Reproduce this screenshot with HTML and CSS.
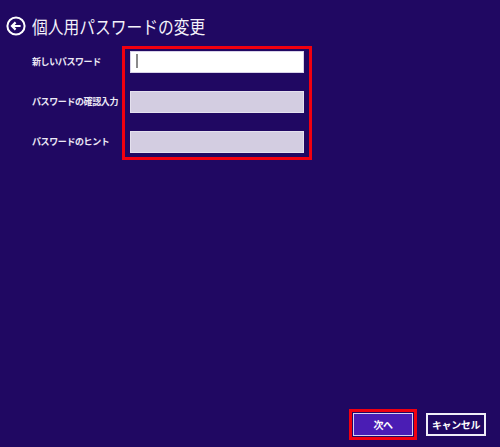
FILE: index.html
```html
<!DOCTYPE html>
<html lang="ja">
<head>
<meta charset="utf-8">
<link rel="stylesheet" href="styles.css">
</head>
<body>
<div class="page">
  <header class="header">
    <svg class="back" viewBox="0 0 20 20" width="20" height="20" aria-hidden="true">
      <circle cx="10" cy="10" r="8.6" fill="none" stroke="#fff" stroke-width="2"/>
      <path d="M14.6 10H6.2M9.6 6.4L6 10l3.6 3.6" fill="none" stroke="#fff" stroke-width="2.2" stroke-linecap="butt" stroke-linejoin="miter"/>
    </svg>
    <h1 class="title">個人用パスワードの変更</h1>
  </header>
  <section class="form">
    <div class="labels">
      <div class="label">新しいパスワード</div>
      <div class="label">パスワードの確認入力</div>
      <div class="label">パスワードのヒント</div>
    </div>
    <div class="fields">
      <div class="input active"><span class="caret"></span></div>
      <div class="input disabled"></div>
      <div class="input disabled"></div>
    </div>
  </section>
  <footer class="actions">
    <button class="btn primary">次へ</button>
    <button class="btn">キャンセル</button>
  </footer>
</div>
</body>
</html>
```
FILE: styles.css
```css
html, body {
  margin: 0;
  padding: 0;
  background: #200862;
}
body {
  font-family: "Noto Sans CJK JP", "Noto Sans", sans-serif;
  color: #fff;
}
.page {
  height: 447px;
  display: flex;
  flex-direction: column;
  box-sizing: border-box;
}
.header {
  display: flex;
  align-items: center;
  height: 20px;
  margin-top: 16px;
  padding-left: 6px;
  gap: 6px;
}
.back {
  display: block;
  flex: none;
}
.title {
  margin: 0;
  font-size: 18px;
  font-weight: 400;
  letter-spacing: 0;
  line-height: 20px;
  color: #f4f2fa;
  white-space: nowrap;
  transform: scaleX(0.875);
  transform-origin: left center;
}
.form {
  display: flex;
  margin-top: 10px;
  padding-left: 32px;
}
.labels {
  width: 90px;
  padding-top: 5px;
  display: flex;
  flex-direction: column;
  gap: 18px;
}
.label {
  height: 22px;
  line-height: 22px;
  font-size: 9px;
  font-weight: 700;
  letter-spacing: -0.4px;
  color: #ece9f5;
  white-space: nowrap;
}
.fields {
  width: 190px;
  box-sizing: border-box;
  border: 3px solid #f2000f;
  padding: 2px 5px 4px 5px;
  display: flex;
  flex-direction: column;
  gap: 18px;
}
.input {
  height: 22px;
  box-sizing: border-box;
  border: 1px solid #e6e2f0;
  position: relative;
}
.input.active {
  background: #ffffff;
  border-color: #d8d2e8;
}
.input.disabled {
  background: #d3cde1;
  border-color: #e4e0ee;
}
.caret {
  position: absolute;
  left: 5px;
  top: 2px;
  width: 2px;
  height: 14px;
  background: #8a8a8a;
}
.actions {
  margin-top: auto;
  display: flex;
  justify-content: flex-end;
  gap: 13px;
  padding: 0 14px 11px 0;
}
.btn {
  width: 60px;
  height: 23px;
  box-sizing: border-box;
  border: 2px solid #f0eef8;
  background: #200862;
  color: #fff;
  font-family: "Noto Sans CJK JP", "Noto Sans", sans-serif;
  font-size: 10px;
  font-weight: 700;
  letter-spacing: -0.4px;
  padding: 0;
  line-height: 19px;
}
.btn.primary {
  background: #4a1db4;
  border: 1px solid #d8d0f0;
  outline: 3px solid #f2000f;
  outline-offset: 1px;
}
```
